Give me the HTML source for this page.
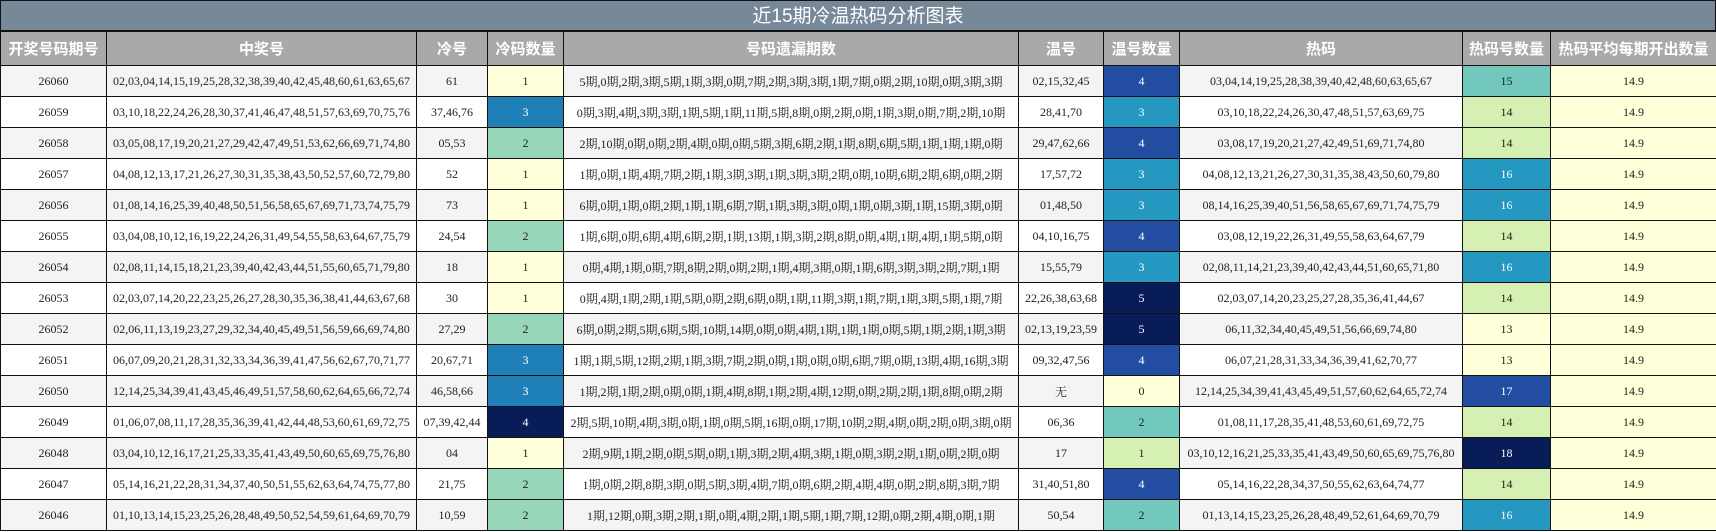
<!DOCTYPE html>
<html><head><meta charset="utf-8"><style>
*{margin:0;padding:0;box-sizing:border-box}
body{width:1716px;height:532px;background:#fff;overflow:hidden;font-family:"Liberation Serif","Noto Serif CJK SC",serif}
.t{height:32px;background:#778899;color:#fff;font:19px "Liberation Sans","Noto Sans CJK SC",sans-serif;text-align:center;line-height:31px;border:1px solid #111;border-bottom:2px solid #111}
.g{display:grid;grid-template-columns:106px 310px 71px 76px 455px 85px 76px 283px 88px 166px;grid-template-rows:34px repeat(15,31px);border-left:1px solid #111}
.g div{border-right:1px solid #111;border-bottom:1px solid #111;display:flex;align-items:center;justify-content:center;font-size:12px;white-space:nowrap;overflow:hidden;color:#222}
.g .h{background:#a9a9a9;color:#fff;font:bold 15px "Liberation Sans","Noto Sans CJK SC",sans-serif}
.g .a{background:#f4f4f4}
.y{background:#ffffd9!important}.lg{background:#d6efb3!important}.m{background:#97d6b9!important}.tl{background:#73c8bd!important}
.b{background:#2498c1!important;color:#fff!important}.b2{background:#1f80b8!important;color:#fff!important}.d{background:#234da0!important;color:#fff!important}.n{background:#081d58!important;color:#fff!important}
</style></head><body>
<div class="t">近15期冷温热码分析图表</div>
<div class="g" id="g">
<div class="h">开奖号码期号</div><div class="h">中奖号</div><div class="h">冷号</div><div class="h">冷码数量</div><div class="h">号码遗漏期数</div><div class="h">温号</div><div class="h">温号数量</div><div class="h">热码</div><div class="h">热码号数量</div><div class="h">热码平均每期开出数量</div>
<div class="a">26060</div><div class="a">02,03,04,14,15,19,25,28,32,38,39,40,42,45,48,60,61,63,65,67</div><div class="a">61</div><div class="y">1</div><div class="a">5期,0期,2期,3期,5期,1期,3期,0期,7期,2期,3期,3期,1期,7期,0期,2期,10期,0期,3期,3期</div><div class="a">02,15,32,45</div><div class="d">4</div><div class="a">03,04,14,19,25,28,38,39,40,42,48,60,63,65,67</div><div class="tl">15</div><div class="y">14.9</div>
<div>26059</div><div>03,10,18,22,24,26,28,30,37,41,46,47,48,51,57,63,69,70,75,76</div><div>37,46,76</div><div class="b2">3</div><div>0期,3期,4期,3期,3期,1期,5期,1期,11期,5期,8期,0期,2期,0期,1期,3期,0期,7期,2期,10期</div><div>28,41,70</div><div class="b">3</div><div>03,10,18,22,24,26,30,47,48,51,57,63,69,75</div><div class="lg">14</div><div class="y">14.9</div>
<div class="a">26058</div><div class="a">03,05,08,17,19,20,21,27,29,42,47,49,51,53,62,66,69,71,74,80</div><div class="a">05,53</div><div class="m">2</div><div class="a">2期,10期,0期,0期,2期,4期,0期,0期,5期,3期,6期,2期,1期,8期,6期,5期,1期,1期,1期,0期</div><div class="a">29,47,62,66</div><div class="d">4</div><div class="a">03,08,17,19,20,21,27,42,49,51,69,71,74,80</div><div class="lg">14</div><div class="y">14.9</div>
<div>26057</div><div>04,08,12,13,17,21,26,27,30,31,35,38,43,50,52,57,60,72,79,80</div><div>52</div><div class="y">1</div><div>1期,0期,1期,4期,7期,2期,1期,3期,3期,1期,3期,3期,2期,0期,10期,6期,2期,6期,0期,2期</div><div>17,57,72</div><div class="b">3</div><div>04,08,12,13,21,26,27,30,31,35,38,43,50,60,79,80</div><div class="b">16</div><div class="y">14.9</div>
<div class="a">26056</div><div class="a">01,08,14,16,25,39,40,48,50,51,56,58,65,67,69,71,73,74,75,79</div><div class="a">73</div><div class="y">1</div><div class="a">6期,0期,1期,0期,2期,1期,1期,6期,7期,1期,3期,3期,0期,1期,0期,3期,1期,15期,3期,0期</div><div class="a">01,48,50</div><div class="b">3</div><div class="a">08,14,16,25,39,40,51,56,58,65,67,69,71,74,75,79</div><div class="b">16</div><div class="y">14.9</div>
<div>26055</div><div>03,04,08,10,12,16,19,22,24,26,31,49,54,55,58,63,64,67,75,79</div><div>24,54</div><div class="m">2</div><div>1期,6期,0期,6期,4期,6期,2期,1期,13期,1期,3期,2期,8期,0期,4期,1期,4期,1期,5期,0期</div><div>04,10,16,75</div><div class="d">4</div><div>03,08,12,19,22,26,31,49,55,58,63,64,67,79</div><div class="lg">14</div><div class="y">14.9</div>
<div class="a">26054</div><div class="a">02,08,11,14,15,18,21,23,39,40,42,43,44,51,55,60,65,71,79,80</div><div class="a">18</div><div class="y">1</div><div class="a">0期,4期,1期,0期,7期,8期,2期,0期,2期,1期,4期,3期,0期,1期,6期,3期,3期,2期,7期,1期</div><div class="a">15,55,79</div><div class="b">3</div><div class="a">02,08,11,14,21,23,39,40,42,43,44,51,60,65,71,80</div><div class="b">16</div><div class="y">14.9</div>
<div>26053</div><div>02,03,07,14,20,22,23,25,26,27,28,30,35,36,38,41,44,63,67,68</div><div>30</div><div class="y">1</div><div>0期,4期,1期,2期,1期,5期,0期,2期,6期,0期,1期,11期,3期,1期,7期,1期,3期,5期,1期,7期</div><div>22,26,38,63,68</div><div class="n">5</div><div>02,03,07,14,20,23,25,27,28,35,36,41,44,67</div><div class="lg">14</div><div class="y">14.9</div>
<div class="a">26052</div><div class="a">02,06,11,13,19,23,27,29,32,34,40,45,49,51,56,59,66,69,74,80</div><div class="a">27,29</div><div class="m">2</div><div class="a">6期,0期,2期,5期,6期,5期,10期,14期,0期,0期,4期,1期,1期,1期,0期,5期,1期,2期,1期,3期</div><div class="a">02,13,19,23,59</div><div class="n">5</div><div class="a">06,11,32,34,40,45,49,51,56,66,69,74,80</div><div class="y">13</div><div class="y">14.9</div>
<div>26051</div><div>06,07,09,20,21,28,31,32,33,34,36,39,41,47,56,62,67,70,71,77</div><div>20,67,71</div><div class="b2">3</div><div>1期,1期,5期,12期,2期,1期,3期,7期,2期,0期,1期,0期,0期,6期,7期,0期,13期,4期,16期,3期</div><div>09,32,47,56</div><div class="d">4</div><div>06,07,21,28,31,33,34,36,39,41,62,70,77</div><div class="y">13</div><div class="y">14.9</div>
<div class="a">26050</div><div class="a">12,14,25,34,39,41,43,45,46,49,51,57,58,60,62,64,65,66,72,74</div><div class="a">46,58,66</div><div class="b2">3</div><div class="a">1期,2期,1期,2期,0期,0期,1期,4期,8期,1期,2期,4期,12期,0期,2期,2期,1期,8期,0期,2期</div><div class="a">无</div><div class="y">0</div><div class="a">12,14,25,34,39,41,43,45,49,51,57,60,62,64,65,72,74</div><div class="d">17</div><div class="y">14.9</div>
<div>26049</div><div>01,06,07,08,11,17,28,35,36,39,41,42,44,48,53,60,61,69,72,75</div><div>07,39,42,44</div><div class="n">4</div><div>2期,5期,10期,4期,3期,0期,1期,0期,5期,16期,0期,17期,10期,2期,4期,0期,2期,0期,3期,0期</div><div>06,36</div><div class="tl">2</div><div>01,08,11,17,28,35,41,48,53,60,61,69,72,75</div><div class="lg">14</div><div class="y">14.9</div>
<div class="a">26048</div><div class="a">03,04,10,12,16,17,21,25,33,35,41,43,49,50,60,65,69,75,76,80</div><div class="a">04</div><div class="y">1</div><div class="a">2期,9期,1期,2期,0期,5期,0期,1期,3期,2期,4期,3期,1期,0期,3期,2期,1期,0期,2期,0期</div><div class="a">17</div><div class="lg">1</div><div class="a">03,10,12,16,21,25,33,35,41,43,49,50,60,65,69,75,76,80</div><div class="n">18</div><div class="y">14.9</div>
<div>26047</div><div>05,14,16,21,22,28,31,34,37,40,50,51,55,62,63,64,74,75,77,80</div><div>21,75</div><div class="m">2</div><div>1期,0期,2期,8期,3期,0期,5期,3期,4期,7期,0期,6期,2期,4期,4期,0期,2期,8期,3期,7期</div><div>31,40,51,80</div><div class="d">4</div><div>05,14,16,22,28,34,37,50,55,62,63,64,74,77</div><div class="lg">14</div><div class="y">14.9</div>
<div class="a">26046</div><div class="a">01,10,13,14,15,23,25,26,28,48,49,50,52,54,59,61,64,69,70,79</div><div class="a">10,59</div><div class="m">2</div><div class="a">1期,12期,0期,3期,2期,1期,0期,4期,2期,1期,5期,1期,7期,12期,0期,2期,4期,0期,1期</div><div class="a">50,54</div><div class="tl">2</div><div class="a">01,13,14,15,23,25,26,28,48,49,52,61,64,69,70,79</div><div class="b">16</div><div class="y">14.9</div>
</div>
</body></html>
